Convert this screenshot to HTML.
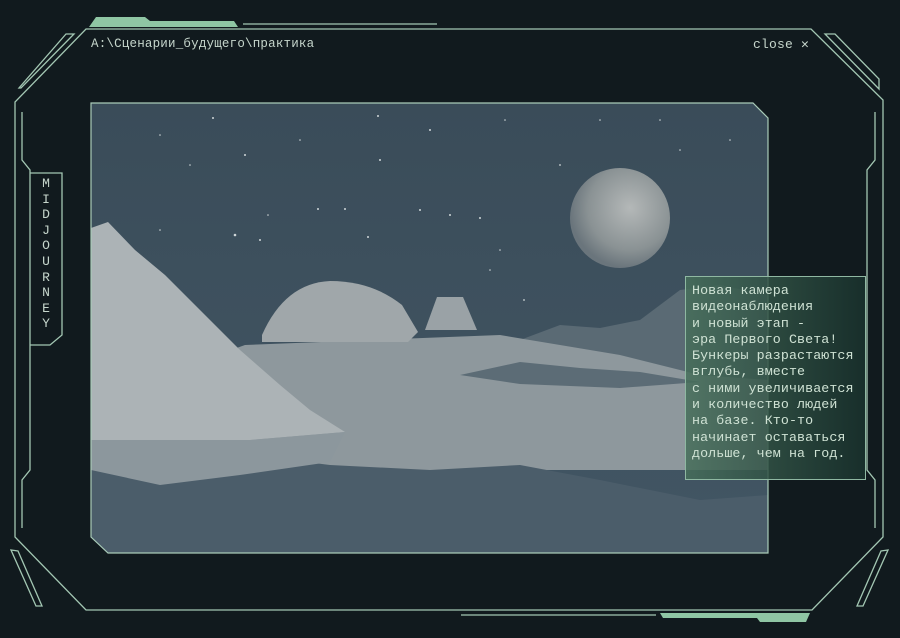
<!DOCTYPE html>
<html><head><meta charset="utf-8"><style>
html,body{margin:0;padding:0;background:#111a1e;}
body{width:900px;height:638px;position:relative;overflow:hidden;font-family:"Liberation Mono","DejaVu Sans Mono",monospace;}
.t{position:absolute;color:#c6d6cc;font-size:12.5px;letter-spacing:0.2px;white-space:nowrap;}
.box{position:absolute;left:685px;top:276px;width:181px;height:204px;background:linear-gradient(90deg,rgba(70,110,90,0.85),rgba(25,50,45,0.85));border:1px solid #8fb8a2;box-sizing:border-box;}
.box div{position:absolute;left:6px;top:6px;color:#cfe2d4;font-size:13.3px;line-height:16.3px;white-space:pre;letter-spacing:0.1px;}
.mj{position:absolute;left:31px;top:176px;width:30px;color:#c6d6cc;font-size:13px;line-height:15.6px;text-align:center;}
</style></head><body>
<svg width="900" height="638" style="position:absolute;left:0;top:0">
<defs>
<radialGradient id="pl" cx="0.6" cy="0.4" r="0.6"><stop offset="0" stop-color="#b4b8b8"/><stop offset="0.7" stop-color="#8a9294"/><stop offset="1" stop-color="#6a757c"/></radialGradient>
<linearGradient id="sky" x1="0" y1="0" x2="0" y2="1"><stop offset="0" stop-color="#3a4c59"/><stop offset="1" stop-color="#425664"/></linearGradient>
<clipPath id="ic"><polygon points="91,103 753,103 768,118 768,553 108,553 91,537"/></clipPath>
</defs>
<g clip-path="url(#ic)">
<rect x="91" y="103" width="677" height="450" fill="url(#sky)"/>
<g fill="#cfd6d8">
<circle cx="213" cy="118" r="1"/><circle cx="378" cy="116" r="1"/><circle cx="160" cy="135" r="0.8"/><circle cx="245" cy="155" r="1"/><circle cx="300" cy="140" r="0.8"/><circle cx="430" cy="130" r="1"/><circle cx="505" cy="120" r="0.8"/><circle cx="560" cy="165" r="0.9"/><circle cx="680" cy="150" r="0.8"/><circle cx="190" cy="165" r="0.8"/><circle cx="380" cy="160" r="1"/><circle cx="235" cy="235" r="1.3"/><circle cx="260" cy="240" r="1"/><circle cx="318" cy="209" r="1"/><circle cx="345" cy="209" r="1"/><circle cx="368" cy="237" r="1"/><circle cx="420" cy="210" r="1"/><circle cx="450" cy="215" r="1"/><circle cx="480" cy="218" r="1"/><circle cx="500" cy="250" r="0.8"/><circle cx="490" cy="270" r="0.8"/><circle cx="524" cy="300" r="0.9"/><circle cx="268" cy="215" r="0.8"/><circle cx="160" cy="230" r="0.8"/><circle cx="660" cy="120" r="0.8"/><circle cx="730" cy="140" r="0.8"/><circle cx="600" cy="120" r="0.8"/>
</g>
<circle cx="620" cy="218" r="50" fill="url(#pl)"/>
<path d="M520,340 L560,325 L600,328 L640,320 L680,290 L720,285 L768,295 L768,400 L520,400Z" fill="#5a6a74"/>
<path d="M245,345 L500,335 L560,345 L620,355 L700,375 L768,380 L768,470 L91,470 L91,400Z" fill="#8e989d"/>
<path d="M460,375 L520,362 L580,368 L640,372 L700,382 L620,388 L520,384Z" fill="#5c6c76"/>
<path d="M262,335 Q285,283 330,281 Q372,281 402,305 L418,332 L408,342 L262,342Z" fill="#a0a7aa"/>
<path d="M425,330 L437,297 L463,297 L477,330Z" fill="#9aa2a6"/>
<path d="M91,440 L91,228 L108,222 L135,250 L165,275 L200,310 L240,350 L280,385 L310,410 L345,432 L250,440Z" fill="#acb3b6"/>
<path d="M91,455 L150,450 L250,455 L330,465 L430,470 L520,465 L600,480 L700,500 L768,495 L768,553 L91,553Z" fill="#4b5d6a"/>
<path d="M91,440 L250,440 L345,432 L330,462 L240,475 L160,485 L91,470Z" fill="#8c979d"/>
</g>
<polygon points="91,103 753,103 768,118 768,553 108,553 91,537" fill="none" stroke="#a9cbb8" stroke-width="1.2"/>
<g fill="none" stroke="#a3c7b3" stroke-width="1.3">
<path d="M86,29 L811,29 L883,100 L883,537 L812,610 L86,610 L15,537 L15,102 Z"/>
<path d="M22,112 L22,160 L30,170 L30,470 L22,480 L22,528"/>
<path d="M875,112 L875,160 L867,170 L867,470 L875,480 L875,528"/>
<path d="M30,173 L62,173 L62,335 L50,345 L30,345"/>
<polygon points="66,34 74,34 21,88 19,88"/>
<polygon points="825,34 835,34 879,79 879,89"/>
<polygon points="11,550 18,551 42,606 36,606"/>
<polygon points="888,550 881,551 857,606 863,606"/>
<path d="M243,24 L437,24"/>
<path d="M461,615 L656,615"/>
</g>
<polygon points="89,27 96,17 145,17 150,21 234,21 238,27" fill="#8fc6a4"/>
<polygon points="660,613 810,613 806,622 760,622 757,618 663,618" fill="#8fc6a4"/>
</svg>
<div class="t" style="left:91px;top:37px;">A:\Сценарии_будущего\практика</div>
<div class="t" style="left:753px;top:37px;font-size:13px;">close ✕</div>
<div class="mj">M<br>I<br>D<br>J<br>O<br>U<br>R<br>N<br>E<br>Y</div>
<div class="box"><div>Новая камера
видеонаблюдения
и новый этап -
эра Первого Света!
Бункеры разрастаются
вглубь, вместе
с ними увеличивается
и количество людей
на базе. Кто-то
начинает оставаться
дольше, чем на год.</div></div>
</body></html>
